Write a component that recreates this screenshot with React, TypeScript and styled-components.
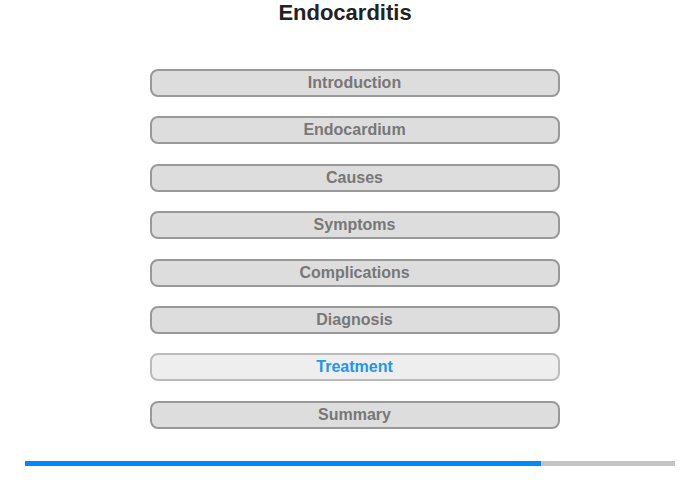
import { createGlobalStyle, styled } from 'styled-components'

const GlobalStyle = createGlobalStyle`
  html, body {
    margin: 0;
    padding: 0;
    background: #ffffff;
  }
  body {
    font-family: "Liberation Sans", Arial, sans-serif;
  }
`

const Page = styled.div`
  width: 700px;
  height: 480px;
  display: flex;
  flex-direction: column;
  align-items: center;
  box-sizing: border-box;
  padding-top: 1px;
`

const Title = styled.h1`
  margin: 0 10px 0 0;
  font-size: 22px;
  font-weight: bold;
  color: #222222;
  line-height: 24px;
  height: 24px;
`

const Menu = styled.nav`
  display: flex;
  flex-direction: column;
  gap: 19.4px;
  margin: 44px 0 0 9px;
`

const MenuButton = styled.div<{ $active?: boolean }>`
  width: 410px;
  height: 28px;
  box-sizing: border-box;
  border: 2px solid ${(p) => (p.$active ? '#bbbbbb' : '#999999')};
  border-radius: 8px;
  background: ${(p) => (p.$active ? '#eeeeee' : '#dddddd')};
  color: ${(p) => (p.$active ? '#2196f3' : '#777777')};
  font-size: 16px;
  font-weight: bold;
  display: flex;
  align-items: center;
  justify-content: center;
  cursor: pointer;
`

const Progress = styled.div`
  width: 650px;
  height: 5px;
  margin-top: 32px;
  background: #c4c4c4;
  display: flex;
`

const ProgressFill = styled.div`
  height: 100%;
  background: #0088ff;
`

const items = [
  'Introduction',
  'Endocardium',
  'Causes',
  'Symptoms',
  'Complications',
  'Diagnosis',
  'Treatment',
  'Summary',
]

const App = () => {
  const active = 'Treatment'
  const progress = 516 / 650

  return (
    <>
      <GlobalStyle />
      <Page>
        <Title>Endocarditis</Title>
        <Menu>
          {items.map((item) => (
            <MenuButton key={item} $active={item === active}>
              {item}
            </MenuButton>
          ))}
        </Menu>
        <Progress>
          <ProgressFill style={{ width: `${progress * 100}%` }} />
        </Progress>
      </Page>
    </>
  )
}

export default App
